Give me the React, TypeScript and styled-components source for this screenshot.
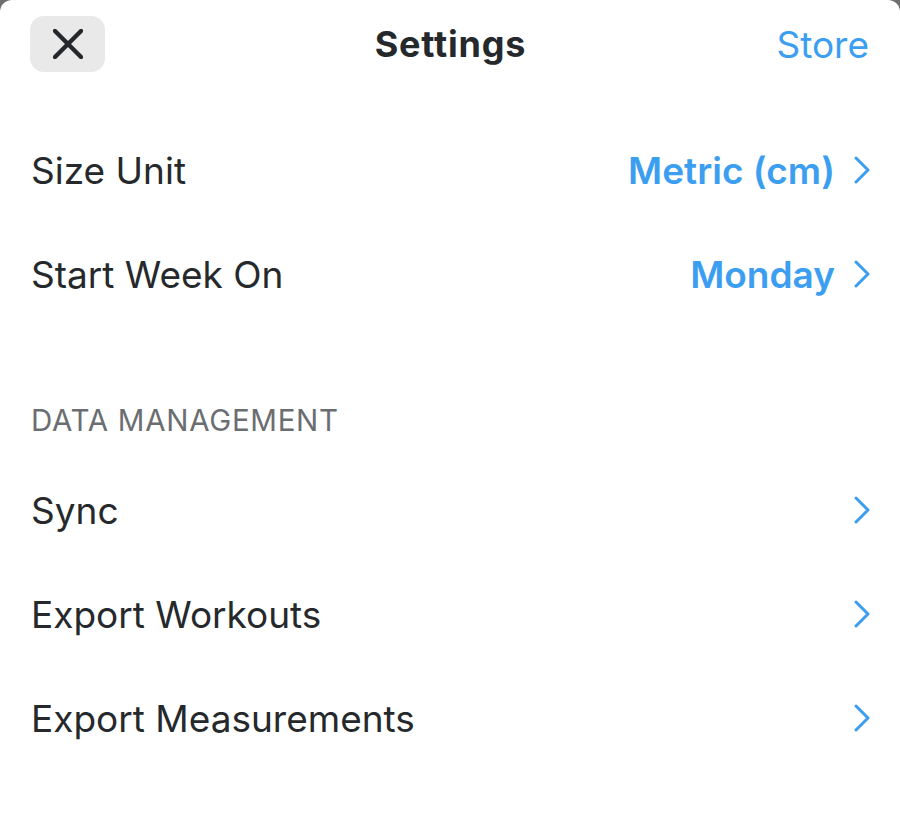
import * as React from "react";
import styled, { createGlobalStyle } from "styled-components";

const GlobalStyle = createGlobalStyle`
  html, body {
    margin: 0;
    padding: 0;
    background: #6f6f70;
  }
  body {
    font-family: Inter, "Noto Sans", sans-serif;
    -webkit-font-smoothing: antialiased;
  }
  *, *::before, *::after {
    box-sizing: border-box;
  }
`;

const Sheet = styled.div`
  min-height: 100vh;
  background: #ffffff;
  border-radius: 12px 12px 0 0;
  color: #25292c;
  overflow: hidden;
`;

const Header = styled.header`
  display: grid;
  grid-template-columns: 1fr auto 1fr;
  align-items: center;
  height: 88px;
  padding: 0 31px 0 30px;
`;

const CloseButton = styled.button`
  justify-self: start;
  width: 75px;
  height: 56px;
  border: none;
  border-radius: 14px;
  background: #e9e9ea;
  display: flex;
  align-items: center;
  justify-content: center;
  padding: 0;
  cursor: pointer;
`;

const Title = styled.h1`
  margin: 0 0 0 2px;
  font-size: 36px;
  font-weight: 700;
  letter-spacing: 0.8px;
  color: #25292c;
`;

const StoreLink = styled.a`
  justify-self: end;
  font-size: 37px;
  font-weight: 400;
  color: #3b9ef0;
  text-decoration: none;
`;

const List = styled.div<{ $top?: number }>`
  display: flex;
  flex-direction: column;
  margin-top: ${(p) => p.$top ?? 0}px;
`;

const SectionTitle = styled.div`
  padding: 78px 30px 24px 31px;
  font-size: 29.5px;
  line-height: 30px;
  font-weight: 400;
  letter-spacing: 0.7px;
  color: #6b6e71;
  text-transform: uppercase;
`;

const Row = styled.div`
  height: 104px;
  display: flex;
  align-items: center;
  padding: 0 30px 2px 31px;
`;

const Label = styled.span`
  flex: 1;
  font-size: 37px;
  font-weight: 400;
  color: #25292c;
`;

const Value = styled.span`
  font-size: 37px;
  font-weight: 600;
  color: #3b9ef0;
  margin-right: 19px;
`;

const Chevron = () => (
  <svg width="16" height="28" viewBox="0 0 16 28" fill="none">
    <path
      d="M2 2 L14 14 L2 26"
      stroke="#3b9ef0"
      strokeWidth="3"
      strokeLinecap="round"
      strokeLinejoin="round"
    />
  </svg>
);

const CloseIcon = () => (
  <svg width="30" height="30" viewBox="0 0 30 30" fill="none">
    <path
      d="M2 2 L28 28 M28 2 L2 28"
      stroke="#24282b"
      strokeWidth="4.4"
      strokeLinecap="round"
    />
  </svg>
);

interface SettingRowProps {
  label: string;
  value?: string;
}

const SettingRow: React.FC<SettingRowProps> = ({ label, value }) => (
  <Row>
    <Label>{label}</Label>
    {value && <Value>{value}</Value>}
    <Chevron />
  </Row>
);

export default function App() {
  return (
    <>
      <GlobalStyle />
      <Sheet>
        <Header>
          <CloseButton aria-label="Close">
            <CloseIcon />
          </CloseButton>
          <Title>Settings</Title>
          <StoreLink href="#">Store</StoreLink>
        </Header>

        <List $top={31}>
          <SettingRow label="Size Unit" value="Metric (cm)" />
          <SettingRow label="Start Week On" value="Monday" />
        </List>

        <SectionTitle>Data Management</SectionTitle>
        <List>
          <SettingRow label="Sync" />
          <SettingRow label="Export Workouts" />
          <SettingRow label="Export Measurements" />
        </List>
      </Sheet>
    </>
  );
}
